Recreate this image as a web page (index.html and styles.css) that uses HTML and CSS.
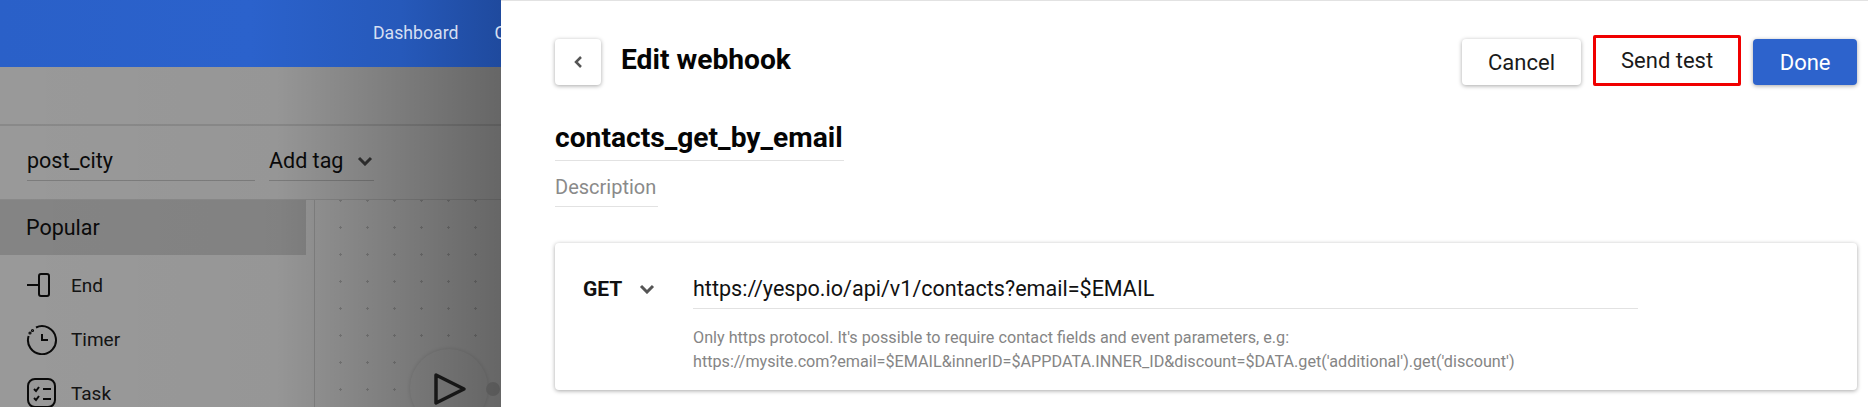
FILE: index.html
```html
<!DOCTYPE html>
<html lang="en">
<head>
  <meta charset="UTF-8" />
  <title>Edit webhook</title>
  <link rel="stylesheet" href="styles.css">
</head>
<body>
  <div class="page">
    <!-- Flow editor behind the drawer -->
    <div class="editor">
      <div class="topbar">
        <a class="nav-link">Dashboard</a>
        <a class="nav-link">Contacts</a>
      </div>
      <div class="workspace">
        <div class="subbar"></div>
        <div class="name-row">
          <div class="name-field">post_city</div>
          <div class="tag-field">
            Add tag
            <svg class="chevron" width="16" height="10" viewBox="0 0 16 10"><path d="M2 2l6 6 6-6" /></svg>
          </div>
        </div>
        <div class="builder">
          <div class="sidebar">
            <div class="group-title">Popular</div>
            <div class="block-item">
              <svg class="block-icon" width="32" height="32" viewBox="0 0 32 32">
                <path d="M1 16h13" />
                <rect x="13" y="5" width="10" height="22" rx="2" />
              </svg>
              End
            </div>
            <div class="block-item">
              <svg class="block-icon" width="32" height="32" viewBox="0 0 32 32">
                <path d="M10 4.5A14 14 0 1 1 2.6 13" />
                <path d="M16 11v6h6" />
                <circle cx="6.5" cy="7.5" r="0.6" />
                <circle cx="4" cy="10" r="0.6" />
              </svg>
              Timer
            </div>
            <div class="block-item">
              <svg class="block-icon" width="32" height="32" viewBox="0 0 32 32">
                <rect x="2" y="2" width="27" height="28" rx="7" />
                <path d="M8 12l2 2 3-4M8 21l2 2 3-4M17 12h8M17 22h8" />
              </svg>
              Task
            </div>
          </div>
          <div class="canvas">
            <div class="start-node">
              <svg width="36" height="36" viewBox="0 0 36 36"><path d="M5 5l28 14-28 14z" /></svg>
            </div>
            <div class="start-port"></div>
          </div>
        </div>
        <div class="scrim"></div>
      </div>
    </div>

    <!-- Webhook drawer -->
    <div class="drawer">
      <div class="drawer-head">
        <div class="head-left">
          <button class="back-btn">
            <svg width="10" height="14" viewBox="0 0 10 14"><path d="M8 2L3 7l5 5" /></svg>
          </button>
          <h1>Edit webhook</h1>
        </div>
        <div class="head-actions">
          <button class="btn btn-cancel">Cancel</button>
          <button class="btn btn-marked">Send test</button>
          <button class="btn btn-primary">Done</button>
        </div>
      </div>

      <h2 class="hook-name">contacts_get_by_email</h2>
      <div class="hook-desc">Description</div>

      <div class="card">
        <div class="method">
          GET
          <svg class="chevron" width="16" height="10" viewBox="0 0 16 10"><path d="M2 2l6 6 6-6" /></svg>
        </div>
        <div class="url-col">
          <div class="url">https://yespo.io/api/v1/contacts?email=$EMAIL</div>
          <p class="hint">Only https protocol. It's possible to require contact fields and event parameters, e.g:<br>https://mysite.com?email=$EMAIL&amp;innerID=$APPDATA.INNER_ID&amp;discount=$DATA.get('additional').get('discount')</p>
        </div>
      </div>
    </div>
  </div>
</body>
</html>
```

FILE: styles.css
```css
* {
  box-sizing: border-box;
  margin: 0;
  padding: 0;
}

body {
  font-family: Roboto, sans-serif;
  color: #111111;
  background-color: #ffffff;
}

.page {
  display: flex;
  height: 407px;
  overflow: hidden;
}

.editor {
  width: 501px;
  flex-shrink: 0;
  overflow: hidden;
}

.topbar {
  height: 67px;
  display: flex;
  align-items: center;
  gap: 36px;
  padding: 0 0 2px 373px;
  background: linear-gradient(90deg, #2a60c8 0%, #2b62cc 50%, #2659ba 80%, #1f4a9e 100%);
  white-space: nowrap;
}

.nav-link {
  font-size: 17.7px;
  color: #d5dff2;
}

.workspace {
  position: relative;
  height: 340px;
  background-color: #ffffff;
}

.scrim {
  position: absolute;
  inset: 0;
  background: linear-gradient(90deg, rgba(0, 0, 0, 0.4) 0%, rgba(0, 0, 0, 0.41) 55%, rgba(0, 0, 0, 0.6) 100%);
}

.subbar {
  height: 59px;
  border-bottom: 2px solid #e4e4e4;
}

.name-row {
  display: flex;
  gap: 14px;
  height: 74px;
  padding: 21px 0 0 27px;
  border-bottom: 1px solid #e4e4e4;
}

.name-field,
.tag-field {
  height: 34px;
  padding-bottom: 5px;
  font-size: 21.5px;
  line-height: 28px;
  border-bottom: 1px solid #cfcfcf;
}

.name-field {
  width: 228px;
}

.tag-field {
  display: flex;
  align-items: center;
  gap: 14px;
  width: 105px;
  white-space: nowrap;
}

.chevron path {
  fill: none;
  stroke: #555555;
  stroke-width: 3;
}

.builder {
  display: flex;
  height: 207px;
}

.sidebar {
  width: 306px;
  flex-shrink: 0;
}

.group-title {
  height: 55px;
  margin-bottom: 3px;
  padding-left: 26px;
  font-size: 21.5px;
  line-height: 55px;
  background-color: #dcdcdc;
}

.block-item {
  display: flex;
  align-items: center;
  gap: 13px;
  height: 54px;
  padding-left: 26px;
  font-size: 19px;
  color: #222222;
}

.block-icon * {
  fill: none;
  stroke: #111111;
  stroke-width: 2;
}

.canvas {
  position: relative;
  flex: 1;
  margin-left: 8px;
  border-left: 1px solid #dddddd;
  background-image: radial-gradient(circle, #d0d0d0 1px, transparent 1.2px);
  background-size: 27px 27px;
  background-position: 12px 14px;
}

.start-node {
  position: absolute;
  left: 95px;
  top: 149px;
  width: 78px;
  height: 78px;
  padding: 21px;
  border-radius: 50%;
  background-color: #fbfbfb;
  box-shadow: 0 0 4px rgba(0, 0, 0, 0.15);
}

.start-node path {
  fill: none;
  stroke: #333333;
  stroke-width: 3.5;
  stroke-linejoin: round;
}

.start-port {
  position: absolute;
  left: 171px;
  top: 182px;
  width: 14px;
  height: 14px;
  border-radius: 50%;
  background-color: #dcdcdc;
}

.drawer {
  flex: 1;
  padding: 39px 11px 0 54px;
  border-top: 1px solid #e2e2e2;
}

.drawer-head {
  display: flex;
  justify-content: space-between;
  align-items: flex-start;
  margin-top: -1px;
}

.head-left {
  display: flex;
  gap: 20px;
}

.back-btn {
  display: flex;
  align-items: center;
  justify-content: center;
  width: 46px;
  height: 46px;
  border: none;
  border-radius: 4px;
  background-color: #ffffff;
  box-shadow: 0 1px 4px rgba(0, 0, 0, 0.35);
}

.back-btn path {
  fill: none;
  stroke: #555555;
  stroke-width: 2.5;
}

h1 {
  font-size: 28.2px;
  font-weight: 700;
  line-height: 42px;
  color: #050505;
}

.head-actions {
  display: flex;
  align-items: flex-start;
  gap: 12px;
}

.btn {
  height: 46px;
  padding: 0 26.5px;
  border: none;
  border-radius: 4px;
  font-family: inherit;
  font-size: 22px;
  color: #1a1a1a;
  background-color: #ffffff;
  box-shadow: 0 1px 4px rgba(0, 0, 0, 0.35);
}

.btn-cancel {
  padding: 0 26px;
}

.btn-marked {
  height: 51px;
  margin-top: -4px;
  padding: 0 25px;
  border: 3px solid #f00000;
  border-radius: 2px;
  box-shadow: none;
}

.btn-primary {
  color: #ffffff;
  background-color: #2d63cc;
}

.hook-name {
  width: 289px;
  margin-top: 34px;
  font-size: 28.2px;
  font-weight: 700;
  line-height: 36px;
  padding-bottom: 4px;
  color: #050505;
  border-bottom: 1px solid #e2e2e2;
  white-space: nowrap;
}

.hook-desc {
  width: 103px;
  margin-top: 11px;
  font-size: 20px;
  line-height: 30px;
  padding-bottom: 4px;
  color: #8a8a8a;
  border-bottom: 1px solid #e2e2e2;
}

.card {
  display: flex;
  height: 147px;
  margin-top: 36px;
  padding: 31px 0 0 28px;
  border-radius: 4px;
  background-color: #ffffff;
  box-shadow: 0 1px 4px rgba(0, 0, 0, 0.35);
}

.method {
  display: flex;
  align-items: center;
  gap: 17px;
  width: 110px;
  height: 30px;
  font-size: 21px;
  font-weight: 700;
}

.url-col {
  width: 945px;
}

.url {
  height: 35px;
  font-size: 21.55px;
  line-height: 30px;
  border-bottom: 1px solid #e2e2e2;
}

.hint {
  margin-top: 17px;
  font-size: 16.18px;
  line-height: 24px;
  color: #858585;
  white-space: nowrap;
}
```
